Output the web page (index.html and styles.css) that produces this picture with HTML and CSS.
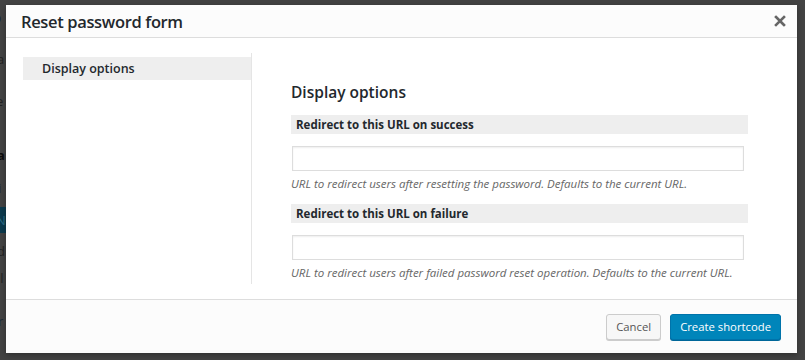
FILE: index.html
```html
<!DOCTYPE html>
<html>
<head>
<meta charset="utf-8">
<link rel="stylesheet" href="styles.css">
</head>
<body>
<div class="backdrop">
  <div class="bg-title">P</div>
  <div class="bg-line bg-l1">a</div>
  <div class="bg-line bg-l2">e</div>
  <div class="bg-line bg-bold">a</div>
  <div class="bg-line bg-l3">si</div>
  <div class="bg-blue">N</div>
  <div class="bg-line bg-l4">d</div>
  <div class="bg-line bg-l5">ll</div>
  <div class="bg-line bg-l6">r</div>
</div>
<div class="modal">
  <div class="modal-header">
    <h1 class="modal-title">Reset password form</h1>
    <span class="close">
      <svg width="12" height="12" viewBox="0 0 12 12"><path d="M2 2 L10 10 M10 2 L2 10" stroke="#666" stroke-width="2.6" stroke-linecap="square"/></svg>
    </span>
  </div>
  <div class="modal-body">
    <div class="sidebar">
      <div class="menu-item">Display options</div>
    </div>
    <div class="content">
      <h2 class="section-title">Display options</h2>
      <div class="field">
        <div class="field-label">Redirect to this URL on success</div>
        <input class="field-input" type="text">
        <p class="field-help">URL to redirect users after resetting the password. Defaults to the current URL.</p>
      </div>
      <div class="field">
        <div class="field-label">Redirect to this URL on failure</div>
        <input class="field-input" type="text">
        <p class="field-help">URL to redirect users after failed password reset operation. Defaults to the current URL.</p>
      </div>
    </div>
  </div>
  <div class="modal-footer">
    <button class="btn btn-secondary">Cancel</button>
    <button class="btn btn-primary">Create shortcode</button>
  </div>
</div>
</body>
</html>
```
FILE: styles.css
```css
html, body {
  margin: 0;
  padding: 0;
  width: 805px;
  height: 360px;
  overflow: hidden;
}
body {
  background: #434343;
  font-family: "Open Sans", "Noto Sans", sans-serif;
  position: relative;
}
.backdrop {
  position: absolute;
  left: 0;
  top: 0;
  width: 40px;
  height: 360px;
  color: #161616;
  font-size: 13px;
}
.bg-title {
  position: absolute;
  left: -12px;
  top: 6px;
  font-size: 23px;
  color: #1a2430;
}
.bg-line { position: absolute; left: -2px; }
.bg-l1 { top: 50px; left: -3px; color: #222; }
.bg-l2 { top: 92px; left: -4px; color: #222; }
.bg-bold { top: 146px; left: -3px; font-weight: 700; color: #0c0c0c; }
.bg-l3 { top: 179px; left: -8px; color: #262626; }
.bg-blue {
  position: absolute;
  left: 0;
  top: 207px;
  width: 6px;
  height: 26px;
  background: #0c3a4d;
  color: #2a6c86;
  line-height: 26px;
  text-indent: -4px;
  overflow: hidden;
}
.bg-l4 { top: 242px; left: -3px; color: #222; }
.bg-l5 { top: 269px; left: -3px; color: #222; }
.bg-l6 { top: 312px; left: -2px; color: #1d2a36; }

.modal {
  position: absolute;
  left: 6px;
  top: 5px;
  width: 791px;
  height: 348px;
  background: #fff;
  display: flex;
  flex-direction: column;
  box-shadow: 0 2px 6px rgba(0,0,0,0.3);
}
.modal-header {
  height: 32px;
  background: #fcfcfc;
  border-bottom: 1px solid #dddddd;
  display: flex;
  align-items: center;
  justify-content: space-between;
  padding: 0 11px 0 15px;
  flex-shrink: 0;
}
.modal-title {
  margin: 0;
  font-size: 16.5px;
  font-weight: 600;
  color: #23282d;
  letter-spacing: -0.35px;
}
.close {
  display: flex;
  width: 12px;
  height: 12px;
}
.modal-body {
  flex: 1;
  display: flex;
  padding: 15px 0;
  min-height: 0;
}
.sidebar {
  width: 228px;
  padding: 4px 0 0 17px;
  border-right: 1px solid #e5e5e5;
  flex-shrink: 0;
}
.menu-item {
  height: 23px;
  line-height: 23px;
  background: #eeeeee;
  padding-left: 19px;
  font-size: 12.5px;
  font-weight: 600;
  color: #23282d;
}
.content {
  padding: 0 0 0 39px;
  width: 457px;
}
.section-title {
  margin: 29px 0 13px;
  font-size: 15.5px;
  font-weight: 600;
  color: #23282d;
  line-height: 20px;
}
.field {
  display: flex;
  flex-direction: column;
}
.field-label {
  height: 19px;
  line-height: 19px;
  background: #eeeeee;
  padding-left: 5px;
  font-size: 11.5px;
  font-weight: 700;
  color: #23282d;
}
.field-input {
  margin: 12px 0 0 1px;
  width: 452px;
  height: 25px;
  box-sizing: border-box;
  border: 1px solid #dddddd;
  box-shadow: inset 0 1px 2px rgba(0,0,0,0.07);
  background: #fff;
  outline: none;
  padding: 0;
}
.field-help {
  margin: 4px 0 11px;
  font-size: 11.5px;
  font-style: italic;
  color: #666666;
  line-height: 18px;
}
.modal-footer {
  height: 53px;
  border-top: 1px solid #dddddd;
  background: #fcfcfc;
  display: flex;
  justify-content: flex-end;
  align-items: center;
  gap: 9px;
  padding: 0 16px 0 0;
  flex-shrink: 0;
}
.btn {
  height: 26px;
  box-sizing: border-box;
  padding: 0 9px;
  font-family: "Open Sans", "Noto Sans", sans-serif;
  font-size: 11.3px;
  border-radius: 3px;
  cursor: pointer;
}
.btn-secondary {
  background: #f7f7f7;
  border: 1px solid #cccccc;
  color: #555555;
  box-shadow: 0 1px 0 #cccccc;
}
.btn-primary {
  background: #0085ba;
  border: 1px solid #0073aa;
  color: #ffffff;
  box-shadow: 0 1px 0 #006799;
}
```
